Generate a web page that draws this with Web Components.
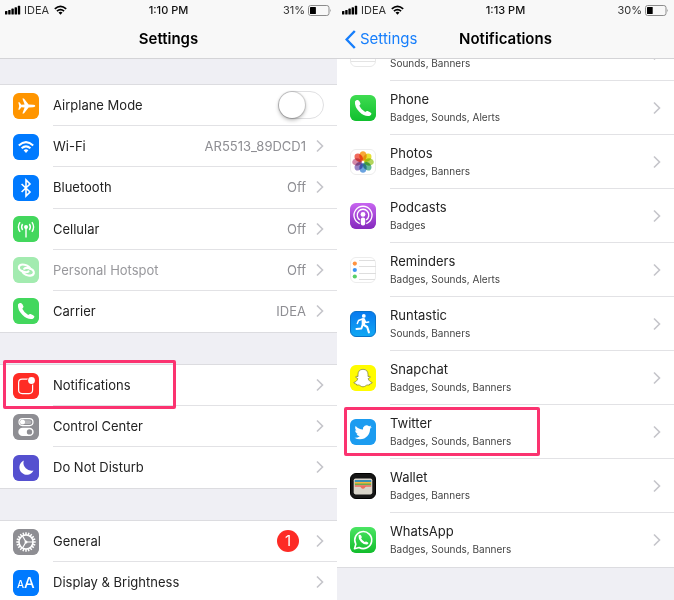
<!DOCTYPE html>
<html lang="en">
<head>
<meta charset="UTF-8">
<meta name="viewport" content="width=device-width, initial-scale=1.0">
<title>Settings</title>
<style>
    body {
        margin: 0;
        height: 100vh;
        display: flex;
        overflow: hidden;
        font-family: Inter, "Liberation Sans", sans-serif;
        color: #222;
        background: #efeff4;
    }
    phone-screen {
        flex: 1;
        min-width: 0;
    }
</style>
</head>
<body>
    <phone-screen heading="Settings" time="1:10 PM" battery="31">
        <settings-group class="spaced" style="--group-height: 249px">
            <settings-row icon="airplane" toggle>Airplane Mode</settings-row>
            <settings-row icon="wifi" value="AR5513_89DCD1">Wi-Fi</settings-row>
            <settings-row icon="bluetooth" value="Off">Bluetooth</settings-row>
            <settings-row icon="cellular" value="Off">Cellular</settings-row>
            <settings-row icon="hotspot" value="Off" dimmed>Personal Hotspot</settings-row>
            <settings-row icon="carrier" value="IDEA">Carrier</settings-row>
        </settings-group>
        <settings-group class="spaced" style="--group-height: 125px">
            <settings-row icon="notifications" highlight>Notifications</settings-row>
            <settings-row icon="control">Control Center</settings-row>
            <settings-row icon="moon">Do Not Disturb</settings-row>
        </settings-group>
        <settings-group class="spaced" style="--group-height: 84px">
            <settings-row icon="gear" badge="1">General</settings-row>
            <settings-row icon="display">Display &amp; Brightness</settings-row>
        </settings-group>
    </phone-screen>

    <phone-screen heading="Notifications" time="1:13 PM" battery="30" back="Settings">
        <settings-group class="scrolled">
            <app-row icon="blank" detail="Sounds, Banners"></app-row>
            <app-row icon="phone" detail="Badges, Sounds, Alerts">Phone</app-row>
            <app-row icon="photos" detail="Badges, Banners">Photos</app-row>
            <app-row icon="podcasts" detail="Badges">Podcasts</app-row>
            <app-row icon="reminders" detail="Badges, Sounds, Alerts">Reminders</app-row>
            <app-row icon="runtastic" detail="Sounds, Banners">Runtastic</app-row>
            <app-row icon="snapchat" detail="Badges, Sounds, Banners">Snapchat</app-row>
            <app-row icon="twitter" detail="Badges, Sounds, Banners" highlight>Twitter</app-row>
            <app-row icon="wallet" detail="Badges, Banners">Wallet</app-row>
            <app-row icon="whatsapp" detail="Badges, Sounds, Banners">WhatsApp</app-row>
        </settings-group>
    </phone-screen>

<script>
const HANDSET = '<path fill="#fff" d="M5 6.4Q6.3 4.6 8 5Q9.6 5.8 10.5 8.6Q10.6 9.6 9.3 10.8Q11 14.6 15.2 17Q16.6 15.7 17.6 16Q20.8 17.2 21.5 18.6Q21.3 20.2 19.4 21Q14.3 21.8 9.3 16.8Q4.4 11.6 5 6.4Z"/>';

// gear teeth and photo petals are the same shape turned around the centre
function turned(count, shape) {
    return Array.from({ length: count }, (_, i) =>
        `<g transform="rotate(${i * 360 / count} 13 13)">${shape(i)}</g>`).join('');
}

const PETALS = ['#f99b1c', '#e5dc18', '#a8cf45', '#4bb08a', '#5596dc', '#8b74bd', '#d0789c', '#ee5546'];

const ICONS = {
    airplane: {
        bg: '#ff9500',
        art: '<path fill="#fff" d="M22.3 13Q22.3 14.1 20.2 14.2L15.6 14.4L10.9 20.4H9.4L11.6 14.4L8.3 14.2L6.5 16.7H5.3L6.2 13L5.3 9.3H6.5L8.3 11.8L11.6 11.6L9.4 5.6H10.9L15.6 11.6L20.2 11.8Q22.3 11.9 22.3 13Z"/>'
    },
    wifi: {
        bg: '#007aff',
        art: `<g fill="none" stroke="#fff" stroke-width="2">
                <path d="M5.8 11.4Q13 4.9 20.2 11.4"/><path d="M8.6 14.3Q13 10.4 17.4 14.3"/>
              </g><path fill="#fff" d="M10.6 16.3Q13 14.4 15.4 16.3L13 18.9Z"/>`
    },
    bluetooth: {
        bg: '#007aff',
        art: '<path fill="none" stroke="#fff" stroke-width="1.6" d="M8.6 9L17 17L13 21V5L17 9L8.6 17"/>'
    },
    cellular: {
        bg: '#43d75d',
        art: `<circle cx="13" cy="11" r="2" fill="#fff"/><g fill="none" stroke="#fff" stroke-width="1.4">
                <path d="M13 11V21.5"/><path d="M9.6 14Q7.6 11 9.6 8"/><path d="M16.4 14Q18.4 11 16.4 8"/>
                <path d="M7.1 15.9Q3.7 11 7.1 6.1"/><path d="M18.9 15.9Q22.3 11 18.9 6.1"/></g>`
    },
    hotspot: {
        bg: '#a3ebb0',
        art: `<g fill="none" stroke="#fff" stroke-width="1.8" stroke-linecap="round" transform="translate(-1.6 -1.9) scale(1.15)">
                <path d="M14.9 14.2Q13.4 15.4 10.6 14.5Q6.2 13.2 6.5 10.3Q7.3 7.5 11.3 8.3Q15.8 9.3 16.5 12"/>
                <path d="M11.1 11.9Q12.6 10.6 15.4 11.5Q19.8 12.8 19.5 15.7Q18.7 18.5 14.7 17.7Q10.2 16.7 9.5 14"/></g>`
    },
    carrier: { bg: '#43d75d', art: HANDSET },
    notifications: {
        bg: '#ff2c25',
        art: `<rect x="5.6" y="6.2" width="14" height="14.4" rx="3.5" fill="none" stroke="#fff" stroke-width="1.2"/>
              <circle cx="18.5" cy="7.5" r="4.3" fill="#ff2c25"/><circle cx="18.5" cy="7.5" r="3.4" fill="#fff"/>`
    },
    control: {
        bg: '#8e8e93',
        art: `<rect x="6" y="4.6" width="14" height="7" rx="3.5" fill="none" stroke="#fff" stroke-width="1.2"/>
              <rect x="10.3" y="6.2" width="8" height="3.8" rx="1.9" fill="#fff" opacity=".35"/>
              <circle cx="9.5" cy="8.1" r="2.5" fill="#fff"/>
              <rect x="5.3" y="13.7" width="15.4" height="8.4" rx="4.2" fill="#fff"/>
              <circle cx="16.5" cy="17.9" r="2.7" fill="#8e8e93"/>`
    },
    moon: {
        bg: '#5550cf',
        art: '<path fill="#fff" d="M10.8 5.6A7.4 7.4 0 1 0 20.5 15.5A8 8 0 0 1 10.8 5.6Z"/>'
    },
    gear: {
        bg: '#8e8e93',
        art: turned(20, () => '<path stroke="#fff" stroke-width="1.5" d="M13 3.3V6"/>') +
            '<circle cx="13" cy="13" r="7" fill="none" stroke="#fff" stroke-width="1.6"/><circle cx="13" cy="13" r="1.5" fill="#fff"/>' +
            '<path stroke="#fff" stroke-width="1.2" d="M13 13H20M13 13L9.5 7M13 13L9.5 19"/>'
    },
    display: {
        bg: '#007aff',
        art: '<g fill="#fff" font-family="Inter, sans-serif" font-weight="500"><text x="4" y="18" font-size="10">A</text><text x="11" y="18" font-size="15">A</text></g>'
    },
    blank: {
        bg: '#fff', line: '#e8e8e8',
        art: '<path stroke="#e4e4e4" d="M1 20.5H25"/>'
    },
    phone: { bg: '#3fdc51', to: '#10bf2e', art: HANDSET },
    photos: {
        bg: '#fff', line: '#ececec',
        art: '<g style="isolation:isolate">' + turned(8, i => `<ellipse cx="13" cy="7" rx="3.7" ry="4.8" fill="${PETALS[i]}" opacity=".88" style="mix-blend-mode:multiply"/>`) + '</g>'
    },
    podcasts: {
        bg: '#c765f0', to: '#8429bd',
        art: `<g fill="none" stroke="#fff" stroke-width="1.3"><path d="M9.7 20.6A9 9 0 1 1 16.3 20.6"/><path d="M9.8 16.9A5.8 5.8 0 1 1 16.2 16.9"/></g>
              <circle cx="13" cy="11.4" r="2.4" fill="#fff"/><rect x="10.8" y="14.4" width="4.4" height="8" rx="2" fill="#fff"/>`
    },
    reminders: {
        bg: '#fff', line: '#ececec',
        art: `<path stroke="#dedede" d="M9 3.5H25M9 9.5H26M9 16.5H26M9 22.5H25"/>
              <circle cx="4.8" cy="6.6" r="2.1" fill="#ff9340"/><circle cx="4.8" cy="13" r="2.1" fill="#3e94f4"/><circle cx="4.8" cy="19.5" r="2.1" fill="#58cf68"/>`
    },
    runtastic: {
        bg: '#0879ef', to: '#10a8f3', line: '#0872c8',
        art: `<circle cx="13.8" cy="4.9" r="1.9" fill="#fff"/>
              <g fill="none" stroke="#fff" stroke-linecap="round" stroke-linejoin="round">
                <path stroke-width="3.4" d="M13.3 8.7L13.4 13"/><path stroke-width="1.5" d="M12.4 8L8.5 9.5L7.3 12.5"/>
                <path stroke-width="1.5" d="M14.3 8.3L15.6 11.4L18.7 11"/>
                <path stroke-width="2.1" d="M13.9 14L17.2 16L18.9 21.4"/><path stroke-width="2" d="M12.7 13.6L11.4 17.5L6.5 17.9"/></g>`
    },
    snapchat: {
        bg: '#fffc00',
        art: `<path fill="#fff" stroke="#777b32" stroke-width=".7" stroke-linejoin="round" d="M13 4.3C9.8 4.3 8 6.4 8 9.2V11.5L6.2 11.3L5.7 12.3L7.8 13.6C7.2 15.8 5.6 17 3.8 17.5C4 18.6 5.2 18.7 6.3 19L6.8 20.1C8.3 19.8 9.2 19.9 10.2 20.7C12 22.2 14 22.2 15.8 20.7C16.8 19.9 17.7 19.8 19.2 20.1L19.7 19C20.8 18.7 22 18.6 22.2 17.5C20.4 17 18.8 15.8 18.2 13.6L20.3 12.3L19.8 11.3L18 11.5V9.2C18 6.4 16.2 4.3 13 4.3Z"/>`
    },
    twitter: {
        bg: '#1c9cf0',
        art: '<path fill="#fff" transform="translate(4.5 4.6) scale(.72)" d="M23.953 4.57a10 10 0 01-2.825.775 4.958 4.958 0 002.163-2.723c-.951.555-2.005.959-3.127 1.184a4.92 4.92 0 00-8.384 4.482C7.69 8.095 4.067 6.13 1.64 3.162a4.822 4.822 0 00-.666 2.475c0 1.71.87 3.213 2.188 4.096a4.904 4.904 0 01-2.228-.616v.06a4.923 4.923 0 003.946 4.827 4.996 4.996 0 01-2.212.085 4.936 4.936 0 004.604 3.417 9.867 9.867 0 01-6.102 2.105c-.39 0-.779-.023-1.17-.067a13.995 13.995 0 007.557 2.209c9.053 0 13.998-7.496 13.998-13.985 0-.21 0-.42-.015-.63A9.935 9.935 0 0024 4.59z"/>'
    },
    wallet: {
        bg: '#161616', line: '#000',
        art: `<rect x="3.7" y="5.4" width="18.6" height="16" rx="1.8" fill="#d8d4c9"/>
              <path fill="#388fb3" d="M4.8 7H21.2V9.2H4.8Z"/><path fill="#f4b63c" d="M4.8 9H21.2V11H4.8Z"/>
              <path fill="#69ac51" d="M4.8 10.5H21.2V12.3H4.8Z"/>
              <path fill="#ef6d5f" d="M4.8 12.2H21.2V13.7H16C15 13.7 14.9 15.7 13 15.7S11 13.7 10 13.7H4.8Z"/>`
    },
    whatsapp: {
        bg: '#4be563', to: '#12bd2c',
        art: `<path fill="none" stroke="#fff" stroke-width="1.6" stroke-linejoin="round" d="M4.5 21.7L5.8 17.2A8.5 8.5 0 1 1 9.1 20.5Z"/>
              <g transform="translate(5.4 4.7) scale(.61)">${HANDSET}</g>`
    }
};

class AppIcon extends HTMLElement {
    connectedCallback() {
        const icon = ICONS[this.getAttribute('name')];
        const line = icon.line ? `stroke="${icon.line}"` : '';
        this.attachShadow({ mode: 'open' });
        this.shadowRoot.innerHTML = `
            <style>
                :host { display: block; flex: none; width: 26px; height: 26px; }
                svg { display: block; width: 100%; height: 100%; }
            </style>
            <svg viewBox="0 0 26 26" aria-hidden="true">
                <linearGradient id="bg" x2="0" y2="1">
                    <stop stop-color="${icon.bg}"/>
                    <stop offset="1" stop-color="${icon.to || icon.bg}"/>
                </linearGradient>
                <rect x=".5" y=".5" width="25" height="25" rx="5.5" fill="url(#bg)" ${line}/>
                ${line ? '' : '<rect width="26" height="26" rx="6" fill="url(#bg)"/>'}
                ${icon.art}
            </svg>
        `;
    }
}
customElements.define('app-icon', AppIcon);

class ChevronIcon extends HTMLElement {
    connectedCallback() {
        this.attachShadow({ mode: 'open' });
        this.shadowRoot.innerHTML = `
            <style>
                :host { display: block; flex: none; width: 8px; height: 14px; }
                svg { display: block; }
            </style>
            <svg width="8" height="14" viewBox="0 0 8 14" aria-hidden="true">
                <path d="M1 1.5L6.5 7L1 12.5" fill="none" stroke="#c5c5ca" stroke-width="1.6"/>
            </svg>
        `;
    }
}
customElements.define('chevron-icon', ChevronIcon);

class StatusBar extends HTMLElement {
    connectedCallback() {
        const battery = this.getAttribute('battery');
        this.attachShadow({ mode: 'open' });
        this.shadowRoot.innerHTML = `
            <style>
                :host {
                    display: grid;
                    grid-template-columns: 1fr auto 1fr;
                    align-items: center;
                    height: 20px;
                    padding: 0 5px;
                    font-size: 11px;
                    color: #333;
                }
                div { display: flex; align-items: center; gap: 3px; }
                .right { justify-content: flex-end; }
                .wifi { margin-left: 2px; }
                time { font-weight: 500; color: #111; }
            </style>
            <div>
                <svg width="16" height="10" viewBox="0 0 16 10" fill="#000" aria-hidden="true">
                    <rect y="6" width="2.4" height="3.5" rx=".6"/><rect x="3.2" y="5" width="2.4" height="4.5" rx=".6"/>
                    <rect x="6.4" y="3.6" width="2.4" height="5.9" rx=".6"/><rect x="9.6" y="2.2" width="2.4" height="7.3" rx=".6"/>
                    <rect x="12.8" y=".8" width="2.4" height="8.7" rx=".6"/>
                </svg>
                <span>IDEA</span>
                <svg class="wifi" width="13" height="10" viewBox="0 0 13 10" aria-hidden="true">
                    <path d="M.8 3.8Q6.5-1.2 12.2 3.8M2.9 6.1Q6.5 3 10.1 6.1" fill="none" stroke="#000" stroke-width="1.7"/>
                    <path d="M4.5 7.6Q6.5 6 8.5 7.6L6.5 9.8Z"/>
                </svg>
            </div>
            <time>${this.getAttribute('time')}</time>
            <div class="right">
                <span>${battery}%</span>
                <svg width="24" height="11" viewBox="0 0 24 11" aria-hidden="true">
                    <rect x=".5" y=".5" width="20.5" height="10" rx="2.2" fill="none" stroke="#8c8c8c"/>
                    <path d="M22.3 3.8Q23.7 5.5 22.3 7.2Z" fill="#8c8c8c"/>
                    <rect x="2" y="2" width="${battery * 0.19}" height="7" rx=".6"/>
                </svg>
            </div>
        `;
    }
}
customElements.define('status-bar', StatusBar);

class PhoneScreen extends HTMLElement {
    connectedCallback() {
        const back = this.getAttribute('back');
        this.attachShadow({ mode: 'open' });
        this.shadowRoot.innerHTML = `
            <style>
                :host { display: block; overflow: hidden; background: #efeff4; }
                header {
                    position: relative;
                    z-index: 2;
                    background: #f8f8f8;
                    border-bottom: 1px solid #d4d4d7;
                }
                nav {
                    display: grid;
                    grid-template-columns: 1fr auto 1fr;
                    align-items: center;
                    height: 38px;
                    padding: 0 8px;
                }
                h1 { grid-column: 2; margin: 0; font-size: 15px; line-height: 20px; font-weight: 600; color: #000; }
                a {
                    display: flex;
                    align-items: center;
                    gap: 4px;
                    color: #167efb;
                    font-size: 15px;
                    line-height: 20px;
                    text-decoration: none;
                }
            </style>
            <header>
                <status-bar time="${this.getAttribute('time')}" battery="${this.getAttribute('battery')}"></status-bar>
                <nav>
                    ${back ? `<a href="#"><svg width="11" height="19" viewBox="0 0 11 19" aria-hidden="true"><path d="M9.8 1L1.6 9.5L9.8 18" fill="none" stroke="#167efb" stroke-width="2.4"/></svg>${back}</a>` : ''}
                    <h1>${this.getAttribute('heading')}</h1>
                </nav>
            </header>
            <main><slot></slot></main>
        `;
    }
}
customElements.define('phone-screen', PhoneScreen);

class SettingsGroup extends HTMLElement {
    connectedCallback() {
        this.attachShadow({ mode: 'open' });
        this.shadowRoot.innerHTML = `
            <style>
                :host {
                    display: grid;
                    grid-auto-rows: 1fr;
                    box-sizing: border-box;
                    min-height: var(--group-height, 0);
                    background: #fff;
                    border-bottom: 1px solid #dcdce0;
                }
                :host(.spaced) { margin-top: 25px; border-top: 1px solid #dcdce0; }
                :host(.spaced:not(:first-child)) { margin-top: 31px; }
                /* list is scrolled partly under the header */
                :host(.scrolled) { margin-top: -32px; }
            </style>
            <slot></slot>
        `;
    }
}
customElements.define('settings-group', SettingsGroup);

const ROW_STYLE = `
    :host { display: grid; position: relative; }
    .row {
        display: flex;
        align-items: center;
        gap: 14px;
        padding-left: 13px;
        color: inherit;
        text-decoration: none;
    }
    .body {
        flex: 1;
        align-self: stretch;
        display: flex;
        align-items: center;
        padding-right: 13px;
        border-bottom: 1px solid #e2e2e5;
    }
    :host(:last-child) .body { border-bottom-color: transparent; }
    .name { font-size: 13px; line-height: 18px; }
    :host([highlight]) { z-index: 1; }
    :host([highlight])::after {
        content: "";
        position: absolute;
        border: 3px solid #fb3370;
        border-radius: 2px;
        box-sizing: border-box;
        pointer-events: none;
    }
`;

class SettingsRow extends HTMLElement {
    connectedCallback() {
        const value = this.getAttribute('value');
        const badge = this.getAttribute('badge');
        const toggle = this.hasAttribute('toggle');
        const tag = toggle ? 'label' : 'a';
        this.attachShadow({ mode: 'open' });
        this.shadowRoot.innerHTML = `
            <style>
                ${ROW_STYLE}
                .name { flex: 1; }
                :host([dimmed]) .name { color: #98989c; }
                .value { font-size: 13px; line-height: 18px; color: #8e8e93; margin-right: 10px; }
                .badge {
                    width: 22px;
                    border-radius: 11px;
                    margin-right: 17px;
                    background: #fd2b25;
                    color: #fff;
                    font-size: 15px;
                    line-height: 22px;
                    text-align: center;
                }
                input {
                    appearance: none;
                    display: flex;
                    width: 46px;
                    height: 28px;
                    margin: 0;
                    border: 1px solid #e0e0e2;
                    border-radius: 14px;
                    background: #fff;
                }
                input::before {
                    content: "";
                    width: 26px;
                    height: 26px;
                    border-radius: 50%;
                    background: #fff;
                    box-shadow: 0 2px 4px rgba(0, 0, 0, .3), 0 0 1px 1px rgba(0, 0, 0, .15);
                }
                input:checked { background: #4cd964; justify-content: flex-end; }
                :host([highlight])::after { inset: -5px auto -3px 3px; width: 173px; }
            </style>
            <${tag} class="row" ${toggle ? '' : 'href="#"'}>
                <app-icon name="${this.getAttribute('icon')}"></app-icon>
                <span class="body">
                    <span class="name"><slot></slot></span>
                    ${value ? `<span class="value">${value}</span>` : ''}
                    ${badge ? `<span class="badge">${badge}</span>` : ''}
                    ${toggle ? '<input type="checkbox" role="switch">' : '<chevron-icon></chevron-icon>'}
                </span>
            </${tag}>
        `;
    }
}
customElements.define('settings-row', SettingsRow);

class AppRow extends HTMLElement {
    connectedCallback() {
        this.attachShadow({ mode: 'open' });
        this.shadowRoot.innerHTML = `
            <style>
                ${ROW_STYLE}
                .row { min-height: 54px; }
                .text { flex: 1; display: flex; flex-direction: column; }
                .name { min-height: 18px; }
                .detail { font-size: 10px; line-height: 18px; color: #444; }
                :host([highlight])::after { inset: 2px auto 3px 7px; width: 196px; }
            </style>
            <a class="row" href="#">
                <app-icon name="${this.getAttribute('icon')}"></app-icon>
                <span class="body">
                    <span class="text">
                        <span class="name"><slot></slot></span>
                        <span class="detail">${this.getAttribute('detail')}</span>
                    </span>
                    <chevron-icon></chevron-icon>
                </span>
            </a>
        `;
    }
}
customElements.define('app-row', AppRow);
</script>
</body>
</html>
